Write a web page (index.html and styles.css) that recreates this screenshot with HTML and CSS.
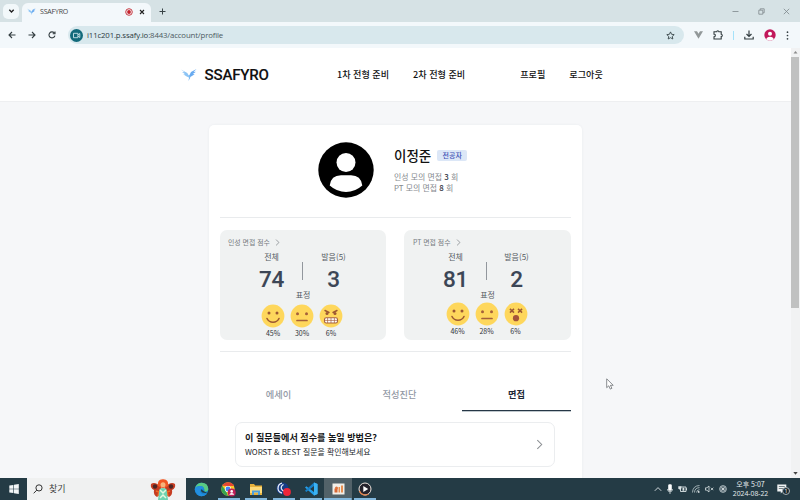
FILE: index.html
```html
<!DOCTYPE html>
<html lang="ko">
<head>
<meta charset="utf-8">
<title>SSAFYRO</title>
<link rel="stylesheet" href="styles.css">
</head>
<body>
<svg class="defs" width="0" height="0" aria-hidden="true">
  <defs>
    <symbol id="bird" viewBox="0 0 16 14"><path d="M0 1.5 6.3 5 8 8 6.5 9 2.2 6.2 4.2 6.3 1 4 3.5 4.3Z" fill="#8cc4f5"/><path d="M15.5 1 10 4 8 8 9.3 9 13.7 6.2 11.8 6.1 15 3.8 12.6 4Z" fill="#68aaf0"/><path d="M7 8 8 7.2 9.5 8 9 10.5 7.3 13 8 10.2Z" fill="#79b9f3"/></symbol>
    <symbol id="chev" viewBox="0 0 8 12"><path d="M1.5 1 6.5 6 1.5 11" fill="none" stroke="currentColor" stroke-width="1.2"/></symbol>
    <symbol id="smile" viewBox="0 0 24 24"><circle cx="12" cy="12" r="11.4" fill="#fed75c"/><circle cx="8" cy="9" r="1.5" fill="#9c5832"/><circle cx="16" cy="9" r="1.5" fill="#9c5832"/><path d="M6 14.500q1.800 3.700 6 3.700t6-3.700" fill="none" stroke="#9c5832" stroke-width="1.600" stroke-linecap="round"/></symbol>
    <symbol id="neutral" viewBox="0 0 24 24"><circle cx="12" cy="12" r="11.4" fill="#fed75c"/><circle cx="7.500" cy="9.700" r="1.500" fill="#a5603a"/><circle cx="16.500" cy="9.700" r="1.500" fill="#a5603a"/><path d="M7 16.500h10" stroke="#a5603a" stroke-width="1.700" stroke-linecap="round"/></symbol>
    <symbol id="angry" viewBox="0 0 24 24"><circle cx="12" cy="12" r="11.4" fill="#fed75c"/><path d="M6 6.500 10 8.500M18 6.500 14 8.500" stroke="#9c5832" stroke-width="1.400" stroke-linecap="round"/><circle cx="8" cy="9.500" r="1.500" fill="#9c5832"/><circle cx="16" cy="9.500" r="1.500" fill="#9c5832"/><rect x="5.500" y="13.800" width="13" height="5.200" rx="1.800" fill="#fff" stroke="#a8623f" stroke-width="1.100"/><path d="M6 16.400h12M8.600 14v5M12 14v5M15.400 14v5" stroke="#a8623f" stroke-width=".7"/></symbol>
    <symbol id="dizzy" viewBox="0 0 24 24"><circle cx="12" cy="12" r="11.4" fill="#fed75c"/><path d="M5.900 6.900 10 10.600M10 6.900 5.900 10.600M14 6.900 18.100 10.600M18.100 6.900 14 10.600" stroke="#9c5832" stroke-width="1.500"/><circle cx="12" cy="16.200" r="3.100" fill="#a4543a"/></symbol>
  </defs>
</svg>

<div class="tabstrip">
  <div class="tab-menu"><svg width="7" height="6" viewBox="0 0 7 6"><path d="M1.300 1.700 3.500 4 5.700 1.700" fill="none" stroke="#222" stroke-width="1.300"/></svg></div>
  <div class="browser-tab">
    <svg width="9" height="9"><use href="#bird"/></svg>
    <span class="tab-title">SSAFYRO</span>
    <svg class="rec" width="8" height="8" viewBox="0 0 8 8"><circle cx="4" cy="4" r="3.300" fill="none" stroke="#c83b43"/><circle cx="4" cy="4" r="1.900" fill="#c5222c"/></svg>
    <svg width="6" height="6" viewBox="0 0 6 6"><path d="m1 1 4 4m0-4L1 5" stroke="#222" stroke-width="1.100"/></svg>
  </div>
  <svg class="newtab" width="7" height="7" viewBox="0 0 7 7"><path d="M3.500.5v6M.5 3.500h6" stroke="#394346" stroke-width="1"/></svg>
  <div class="window-buttons">
    <svg width="7" height="7" viewBox="0 0 7 7"><path d="M.5 3.500h6" stroke="#7d888b" stroke-width=".8"/></svg>
    <svg width="7" height="7" viewBox="0 0 7 7"><path d="M.8 2.200h4v4h-4zM2.200 2V.8h4v4H5" fill="none" stroke="#7d888b" stroke-width=".8"/></svg>
    <svg width="7" height="7" viewBox="0 0 7 7"><path d="m.8.8 5.400 5.400m0-5.400L.8 6.200" stroke="#7d888b" stroke-width=".8"/></svg>
  </div>
</div>

<div class="toolbar">
  <svg class="nav-icon" width="8" height="8" viewBox="0 0 8 8"><path d="M7.500 4H1M4 1 1 4l3 3" fill="none" stroke="#333d40" stroke-width="1.100"/></svg>
  <svg class="nav-icon" width="8" height="8" viewBox="0 0 8 8"><path d="M.5 4H7M4 1l3 3-3 3" fill="none" stroke="#333d40" stroke-width="1.100"/></svg>
  <svg class="nav-icon" width="8" height="8" viewBox="0 0 8 8"><path d="M6.900 4.600A3 3 0 1 1 6.300 2M7 .5v2.300H4.700" fill="none" stroke="#333d40" stroke-width="1.100"/></svg>
  <div class="omnibox">
    <svg width="13" height="13" viewBox="0 0 13 13"><circle cx="6.500" cy="6.500" r="6.500" fill="#126a7b"/><path d="M3.500 4.300h4.400v4.400H3.500zM8 5.800l1.800-1.300v4L8 7.200" fill="none" stroke="#c9e4ea" stroke-width=".9"/></svg>
    <span class="url">i11c201.p.ssafy.io<span class="path">:8443/account/profile</span></span>
    <svg width="9" height="9" viewBox="0 0 9 9"><path d="m4.500.9 1.100 2.400 2.600.3-1.900 1.800.5 2.600-2.300-1.300L2.200 8l.5-2.600L.8 3.600l2.600-.3Z" fill="none" stroke="#39464a" stroke-width=".9"/></svg>
  </div>
  <div class="toolbar-icons">
    <svg width="9" height="8" viewBox="0 0 9 8"><path d="M0 .3h3l1.500 2.400L6 .3h3L4.500 7.800Z" fill="#929899"/></svg>
    <svg width="10" height="10" viewBox="0 0 10 10"><path d="M1 1.800h2.700q.1-1.100 1.100-1.100t1.100 1.100h2.300v2.500q1.100 0 1.100 1.100t-1.100 1.100V9H1V6.700q1.300 0 1.300-1.300T1 4.200Z" fill="none" stroke="#333d40" stroke-width="1.100"/></svg>
    <i class="sep"></i>
    <svg width="10" height="10" viewBox="0 0 10 10"><path d="M5 .5v5.800M2.500 4 5 6.500 7.500 4M.8 6.800V9h8.400V6.800" fill="none" stroke="#333d40" stroke-width="1.200"/></svg>
    <svg width="12" height="12" viewBox="0 0 12 12"><circle cx="6" cy="6" r="5.700" fill="#c2185b"/><circle cx="6" cy="4.800" r="2" fill="#fff"/><path d="M2.300 10.300Q2.700 7.700 6 7.700t3.700 2.600Q8.200 11.700 6 11.700t-3.700-1.400Z" fill="#fff"/></svg>
    <svg width="3" height="9" viewBox="0 0 3 9"><g fill="#333d40"><circle cx="1.500" cy="1.200" r=".85"/><circle cx="1.500" cy="4.500" r=".85"/><circle cx="1.500" cy="7.800" r=".85"/></g></svg>
  </div>
</div>

<div class="viewport">
  <div class="page">
    <header class="site-header">
      <svg width="16" height="14"><use href="#bird"/></svg>
      <span class="brand">SSAFYRO</span>
      <nav class="site-nav"><a>1차 전형 준비</a><a>2차 전형 준비</a><a class="push">프로필</a><a>로그아웃</a></nav>
    </header>
    <main class="card">
      <section class="profile">
        <svg width="56" height="56" viewBox="0 0 56 56"><circle cx="28" cy="28" r="27.700" fill="#000"/><circle cx="28" cy="20.500" r="9.500" fill="#fff"/><path d="M11.700 43.500Q13 33.300 23 33.300h10q10 0 11.300 10.200Q37 50 28 50t-16.300-6.500Z" fill="#fff"/></svg>
        <div class="profile-info">
          <div class="name-row"><span class="name">이정준</span><span class="badge">전공자</span></div>
          <div class="count">인성 모의 면접 <b>3</b> 회</div>
          <div class="count">PT 모의 면접 <b>8</b> 회</div>
        </div>
      </section>
      <section class="scores">
        <article class="score">
          <div class="score-title">인성 면접 점수<svg width="5" height="7"><use href="#chev"/></svg></div>
          <div class="figures"><div class="figure"><span>전체</span><strong>74</strong></div><i class="bar"></i><div class="figure"><span>발음(5)</span><strong>3</strong></div></div>
          <div class="face-label">표정</div>
          <div class="faces">
            <div><svg width="24" height="24"><use href="#smile"/></svg>45%</div>
            <div><svg width="24" height="24"><use href="#neutral"/></svg>30%</div>
            <div><svg width="24" height="24"><use href="#angry"/></svg>6%</div>
          </div>
        </article>
        <article class="score pt">
          <div class="score-title">PT 면접 점수<svg width="5" height="7"><use href="#chev"/></svg></div>
          <div class="figures"><div class="figure"><span>전체</span><strong>81</strong></div><i class="bar"></i><div class="figure"><span>발음(5)</span><strong>2</strong></div></div>
          <div class="face-label">표정</div>
          <div class="faces">
            <div><svg width="24" height="24"><use href="#smile"/></svg>46%</div>
            <div><svg width="24" height="24"><use href="#neutral"/></svg>28%</div>
            <div><svg width="24" height="24"><use href="#dizzy"/></svg>6%</div>
          </div>
        </article>
      </section>
      <div class="tabs"><span>에세이</span><span>적성진단</span><span class="active">면접</span></div>
      <div class="advice">
        <div><div class="advice-title">이 질문들에서 점수를 높일 방법은?</div><div class="advice-sub">WORST &amp; BEST 질문을 확인해보세요</div></div>
        <svg width="7" height="11"><use href="#chev"/></svg>
      </div>
    </main>
  </div>
  <div class="scrollbar">
    <svg width="9" height="9" viewBox="0 0 9 9"><path d="M2.500 5.500h4l-2-2.500Z" fill="#8b8b8b"/></svg>
    <div class="thumb"></div>
    <svg class="down" width="9" height="9" viewBox="0 0 9 9"><path d="M2.300 3h4.400L4.500 5.700Z" fill="#444"/></svg>
  </div>
</div>

<div class="taskbar">
  <div class="start"><svg width="10" height="10" viewBox="0 0 10 10"><path d="M.3 1.500 4.400.9v3.800H.3ZM5 .8 9.800.1v4.600H5ZM.3 5.300h4.100v3.800L.3 8.500ZM5 5.300h4.800v4.600L5 9.200Z" fill="#f2f6f7"/></svg></div>
  <div class="search">
    <svg width="10" height="10" viewBox="0 0 10 10"><circle cx="6" cy="3.900" r="3.100" fill="none" stroke="#333"/><path d="M3.800 6.100.7 9.300" stroke="#333"/></svg>
    <span>찾기</span>
    <svg class="doodle" width="26" height="21" viewBox="0 0 26 21"><path d="M11 8Q5 2 1 5q-1 4 3 6-1 5 3 7l5-4ZM15 8q6-6 10-3 1 4-3 6 1 5-3 7l-5-4Z" fill="#c63d22"/><circle cx="5" cy="7.500" r="2.200" fill="#4b2625"/><circle cx="21" cy="7.500" r="2.200" fill="#4b2625"/><path d="M6 12l3 1-1 4M20 12l-3 1 1 4" fill="none" stroke="#f06c24" stroke-width="1.500"/><path d="M8 7Q7 0 13 .3 19 0 18 7q-5 4-10 0Z" fill="#f05623"/><circle cx="13" cy="5.800" r="2.500" fill="#f6b37b"/><path d="M9.500 10q3.500-2 7 0l1.500 11H8Z" fill="#6ed3b1"/><path d="m10 11 3 3 3-3M10 19l3-3 3 3" fill="none" stroke="#e4f8df" stroke-width="1.500"/></svg>
  </div>
  <div class="apps">
    <div class="app"><svg width="15" height="15" viewBox="0 0 15 15"><circle cx="7.500" cy="7.500" r="6.800" fill="#1683d1"/><path d="M1 6Q3 .7 7.800.7q6 0 6.500 6.300-.4 3-3.900 2.700Q11 4 6 4 3 4 1 6Z" fill="#59ca83"/><path d="M1 6q2-2 5-2 4 0 4 4-2-2-3.500-.5-1 2 .8 4Q9 13 12.800 12 8 16 4 13 0 10 1 6Z" fill="#238fdf"/><path d="M7 7.200Q6.400 11.500 13.200 11L9.500 9Z" fill="#213b45"/></svg></div>
    <div class="app open"><svg width="15" height="15" viewBox="0 0 15 15"><circle cx="7" cy="7" r="6.700" fill="#fbc829"/><path d="M1.200 3.700a6.700 6.700 0 0 1 12 .3H7Z" fill="#e44634"/><path d="M1.200 3.700 5 9l2 4.700A6.700 6.700 0 0 1 1.200 3.700Z" fill="#35a451"/><circle cx="7" cy="7" r="3.100" fill="#fff"/><circle cx="7" cy="7" r="2.400" fill="#4285f4"/><circle cx="10.700" cy="10.600" r="4" fill="#bf1f59"/><circle cx="10.700" cy="9.400" r="1.300" fill="#fff"/><path d="M8.200 12.700q.5-1.600 2.500-1.600t2.500 1.600Z" fill="#fff"/></svg></div>
    <div class="app open"><svg width="14" height="13" viewBox="0 0 14 13"><path d="M1 1h4l1.200 1.500H13V12H1Z" fill="#e8b23c"/><path d="M1 4h12v6H1Z" fill="#ffdb78"/><path d="M3 7.500h8V12H9V9.500H5V12H3Z" fill="#4e9fdc"/></svg></div>
    <div class="app open"><svg width="15" height="15" viewBox="0 0 15 15"><circle cx="6.500" cy="6.500" r="6" fill="#173c86"/><path d="M6 1.200Q2 2 2 6.500q.2 3.600 4 4.500M7.500 2.500q-3 1.500-2 4.500 1 2 2.500 2" fill="none" stroke="#e9eef7" stroke-width="1.300"/><circle cx="11" cy="10" r="3.900" fill="#ee2639"/></svg></div>
    <div class="app open"><svg width="14" height="14" viewBox="0 0 14 14"><path d="M10 .5 13.500 2v10L10 13.500 1 5.500 2.300 4.200 10 10Z" fill="#24a0ed"/><path d="M10 .5V4L2.300 10 1 8.700Z" fill="#1780c9"/><path d="M10 .5 13.500 2v10L10 13.500Z" fill="#3bb2f3"/></svg></div>
    <div class="app open current"><svg width="13" height="12" viewBox="0 0 13 12"><rect x=".5" y=".5" width="12" height="11" fill="#f1eee8"/><path d="M2.500 5.500h3v4h-3Z" fill="#d76635"/><path d="M6.500 4h1.500v5.500H6.500ZM9 2.500h2v7H9Z" fill="#e88e50"/><circle cx="4.500" cy="5" r="1.500" fill="#dc713c"/></svg></div>
    <div class="app open"><svg width="14" height="14" viewBox="0 0 14 14"><circle cx="7" cy="7" r="6" fill="#25232c" stroke="#eee5df" stroke-width="1"/><path d="M1.500 9a6 6 0 0 0 9 3" fill="none" stroke="#e68147" stroke-width="1.300"/><path d="M5.300 3.900v6.200L10.200 7Z" fill="#fff"/></svg></div>
  </div>
  <div class="tray">
    <svg width="8" height="6" viewBox="0 0 8 6"><path d="M.8 4.800 4 1.600l3.200 3.200" fill="none" stroke="#e4eaec" stroke-width=".9"/></svg>
    <svg width="6" height="10" viewBox="0 0 6 10"><rect x="1.200" y=".3" width="3.600" height="6.400" rx="1.300" fill="#fff"/><path d="M.5 5q0 2.800 2.500 2.800T5.500 5M3 7.500V10" fill="none" stroke="#d7dfe1" stroke-width=".8"/></svg>
    <svg width="9" height="8" viewBox="0 0 9 8"><path d="M2.500 2H8v4.500H2.500ZM8.500 3.200v2" fill="none" stroke="#dce4e6" stroke-width=".9"/><path d="M4.500 2.800h1.800v3H4.500ZM.3 1.300h3v2.500L2 4.800.3 3.800Z" fill="#dce4e6"/></svg>
    <svg width="8" height="8" viewBox="0 0 8 8"><path d="M.5 7.500Q.8.800 7.500.5M2.500 7.500Q2.600 3 7.500 2.600M4.600 7.500Q4.700 5 7.500 4.700" fill="none" stroke="#aebbc0" stroke-width=".9"/><circle cx="6.700" cy="6.900" r=".9" fill="#e2e9eb"/></svg>
    <svg width="9" height="8" viewBox="0 0 9 8"><path d="M.5 2.800h1.400L4 1v6L1.900 5.200H.5ZM5.800 2.700l2.500 2.500m0-2.500L5.800 5.200" fill="none" stroke="#dce4e6" stroke-width=".8"/></svg>
    <svg width="8" height="8" viewBox="0 0 8 8"><circle cx="4" cy="4" r="3.400" fill="#62747c" stroke="#bac6ca" stroke-width=".8"/><path d="m2.500 2.500 3 3m0-3-3 3" stroke="#e5ebed" stroke-width=".8"/></svg>
    <div class="clock"><div>오후 5:07</div><div class="date">2024-08-22</div></div>
    <div class="notice"><svg width="10" height="10" viewBox="0 0 10 10"><path d="M.3.5h9v7H5.500L3.800 9.500v-2H.3Z" fill="#f0f3f4"/><path d="M1.800 2.500h6M1.800 4.500h6" stroke="#415159" stroke-width=".7"/></svg><span>1</span></div>
  </div>
</div>

<svg class="cursor" width="8" height="12" viewBox="0 0 8 12"><path d="M.7.8v8.900l2.100-1.900 1.500 3.300 1.600-.8-1.500-3h2.800Z" fill="#fff" stroke="#6c7075" stroke-width=".8"/></svg>
</body>
</html>
```

FILE: styles.css
```css
* { box-sizing: border-box; }
body {
  margin: 0;
  width: 800px;
  height: 500px;
  overflow: hidden;
  display: flex;
  flex-direction: column;
  font-family: "Noto Sans CJK KR", sans-serif;
  color: #111;
}
svg { display: block; flex: none; }
.defs { position: absolute; }

.tabstrip {
  height: 22px;
  flex: none;
  display: flex;
  align-items: center;
  background: #d6e2e5;
  padding-left: 3px;
}
.tab-menu {
  width: 16px;
  height: 15px;
  border-radius: 5px;
  background: #f2f8fa;
  display: flex;
  align-items: center;
  justify-content: center;
}
.browser-tab {
  margin-left: 3px;
  width: 129px;
  height: 19px;
  align-self: flex-end;
  border-radius: 6px 6px 0 0;
  background: #f3f8fb;
  display: flex;
  align-items: center;
  padding: 0 6px 2px 5px;
}
.tab-title { margin-left: 4px; padding-top: 1px; font: 7px/10px "Open Sans", sans-serif; letter-spacing: -.2px; color: #444; }
.rec { margin-left: auto; margin-right: 6px; }
.newtab { margin-left: 8px; }
.window-buttons { margin-left: auto; padding-right: 10px; display: flex; gap: 18.5px; }

.toolbar {
  height: 26px;
  flex: none;
  display: flex;
  align-items: center;
  background: #f3f8fb;
  padding-left: 8px;
  box-shadow: 0 1px 0 #e6eff2;
}
.nav-icon { margin-right: 12px; }
.omnibox {
  width: 616px;
  height: 18px;
  border-radius: 9px;
  background: #d8e8ed;
  display: flex;
  align-items: center;
  padding: 0 9px 0 2px;
  margin-right: 10px;
}
.url { margin: 0 auto 0 4px; font: 7.8px/12px "Open Sans", sans-serif; letter-spacing: -.15px; color: #2c393d; }
.path { color: #4c5a5f; }
.toolbar-icons { flex: 1; display: flex; align-items: center; justify-content: space-between; padding-right: 11px; }
.sep { width: 1px; height: 9px; background: #a5e2fa; }

.viewport { height: 430px; flex: none; display: flex; overflow: hidden; }
.page { flex: 1; background: #f6f7f9; }
.site-header {
  height: 54px;
  background: #fff;
  border-bottom: 1px solid #eeeff1;
  display: flex;
  align-items: center;
  padding-left: 181px;
}
.brand { width: 132.5px; margin-left: 7.5px; font: 500 15.1px/20px Roboto, sans-serif; letter-spacing: -.2px; -webkit-text-stroke: .1px #111; }
.site-nav { display: flex; gap: 24px; padding-bottom: 1px; font-size: 9.1px; line-height: 14px; font-weight: 500; white-space: nowrap; }
.site-nav .push { margin-left: 31px; }

.card {
  width: 373px;
  height: 400px;
  margin: 23px 0 0 209px;
  padding: 0 11px;
  background: #fff;
  border-radius: 5px;
  box-shadow: 0 0 3px rgba(30, 50, 70, .06);
}
.profile { height: 93px; padding: 17px 0 0 98px; display: flex; border-bottom: 1px solid #e9ebed; }
.profile-info { margin-left: 20px; padding-top: 4px; }
.name-row { display: flex; align-items: center; height: 18px; margin-bottom: 7px; }
.name { font-size: 13.5px; line-height: 18px; font-weight: 500; }
.badge { margin-left: 6px; width: 30px; height: 11px; border-radius: 2px; background: #dce7f7; color: #3c50b4; font-size: 7px; line-height: 11px; text-align: center; font-weight: 500; }
.count { font-size: 7.9px; line-height: 11px; color: #85898e; white-space: nowrap; }
.count b { font-weight: 500; color: #30363f; }

.scores { height: 134px; padding-top: 12px; display: flex; justify-content: space-between; border-bottom: 1px solid #e9ebed; }
.score { width: 166px; height: 110px; border-radius: 7px; background: #f0f2f2; padding-top: 7px; }
.score.pt { width: 167px; }
.score-title { display: flex; align-items: center; gap: 5px; height: 10px; padding-left: 8px; font-size: 6.9px; line-height: 10px; color: #777c81; }
.pt .score-title { padding-left: 9px; }
.figures { display: flex; justify-content: center; height: 42px; margin-top: 4px; padding-right: 1px; }
.pt .figures { padding-right: 3px; }
.figure { width: 61px; display: flex; flex-direction: column; align-items: center; font-size: 8px; line-height: 11px; color: #555b62; }
.pt .figure { width: 60px; }
.figure strong { font: 500 22.5px/28px Roboto, sans-serif; letter-spacing: -.3px; color: #3c4656; margin-top: 3px; -webkit-text-stroke: .1px #3c4656; }
.bar { width: 1px; height: 18px; margin-top: 11px; background: #92979d; }
.face-label { text-align: center; font-size: 8px; line-height: 11px; margin-top: -4px; color: #555b62; }
.faces { display: flex; justify-content: center; gap: 5px; margin-top: 4px; padding-right: 2px; font-size: 7px; line-height: 10px; text-align: center; color: #30343a; }
.pt .faces { margin-top: 2px; padding-right: 2px; }

.tabs { display: flex; justify-content: space-between; height: 59px; }
.tabs span { width: 117px; padding-top: 35px; text-align: center; font-size: 9.2px; line-height: 15px; font-weight: 500; color: #9198a4; }
.tabs span + span { width: 125px; }
.tabs span.active { width: 109px; color: #1f2937; font-weight: 700; border-bottom: 1.5px solid #263746; box-shadow: 0 .5px 0 #81909a; }

.advice { margin: 11px 16px 0 15px; height: 45px; border: 1px solid #ebedef; border-radius: 7px; display: flex; align-items: center; justify-content: space-between; padding: 0 11px 0 9px; color: #8a8e92; }
.advice-title { color: #151719; font-size: 9.1px; line-height: 15px; font-weight: 700; white-space: nowrap; }
.advice-sub { color: #24272a; font-size: 7.9px; line-height: 14px; white-space: nowrap; }

.scrollbar { width: 9px; background: #f1f2f3; display: flex; flex-direction: column; }
.thumb { height: 251px; margin: 0 1px 0 0; background: #c0c1c1; }
.down { margin-top: auto; }

.taskbar { height: 22px; flex: none; background: #243b45; display: flex; }
.start { width: 27px; display: flex; align-items: center; justify-content: center; }
.search { width: 159px; background: #f0f1f1; display: flex; align-items: center; padding: 0 10px 0 6px; font-size: 9px; line-height: 14px; color: #454545; }
.search span { margin-left: 6px; }
.doodle { margin-left: auto; }
.apps { display: flex; padding-left: 2px; }
.app { width: 27.3px; display: flex; align-items: center; justify-content: center; }
.app.open { background: linear-gradient(#83b8dd, #83b8dd) center bottom / 22px 2px no-repeat; }
.app.current { background-color: #526269; background-size: 100% 2px; }
.tray { flex: 1; display: flex; align-items: center; justify-content: flex-end; gap: 5px; padding-right: 10px; color: #e7edef; }
.clock { width: 41px; margin-left: -2px; text-align: center; font-size: 7px; line-height: 10px; white-space: nowrap; }
.date { font-family: "Open Sans", sans-serif; font-size: 6.8px; }
.notice { position: relative; margin-left: 1px; width: 13px; }
.notice span { position: absolute; left: 5px; top: 3px; width: 8px; height: 8px; border-radius: 4px; background: #18262d; border: .5px solid #a9b3b7; font: 6px/7px "Open Sans", sans-serif; text-align: center; }
.cursor { position: absolute; left: 606px; top: 378px; }
```
